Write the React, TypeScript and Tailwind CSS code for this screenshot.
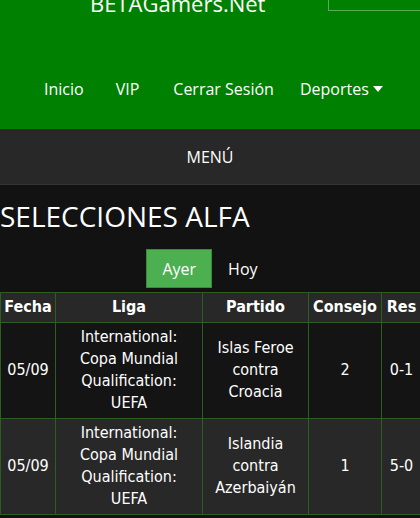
const sans = { fontFamily: '"Open Sans", "Noto Sans", sans-serif' };

const rows = [
  {
    fecha: '05/09',
    liga: ['International:', 'Copa Mundial', 'Qualification:', 'UEFA'],
    partido: ['Islas Feroe', 'contra', 'Croacia'],
    consejo: '2',
    res: '0-1',
  },
  {
    fecha: '05/09',
    liga: ['International:', 'Copa Mundial', 'Qualification:', 'UEFA'],
    partido: ['Islandia', 'contra', 'Azerbaiyán'],
    consejo: '1',
    res: '5-0',
  },
];

export default function App() {
  return (
    <div className="w-[420px] h-[518px] overflow-hidden bg-[#121212] text-white" style={sans}>
      {/* Header */}
      <header className="bg-[#008000] pb-[29px]">
        <div className="flex items-start h-[18px]">
          <div className="ml-[90px] -mt-[12px] text-[22px] leading-[30px] whitespace-nowrap">BETAGamers.Net</div>
          <div className="ml-auto -mt-[22px] -mr-[10px] h-[33px] w-[102px] border border-white/35" />
        </div>
        <nav className="mt-[60px] flex items-center pl-[44px] text-[16px] leading-[22px]">
          <span className="whitespace-nowrap">Inicio</span>
          <span className="ml-[32px] whitespace-nowrap">VIP</span>
          <span className="ml-[34px] whitespace-nowrap">Cerrar Sesión</span>
          <span className="ml-[26px] flex items-center gap-[4px] whitespace-nowrap">
            Deportes
            <svg width="10" height="6" viewBox="0 0 10 6" aria-hidden="true">
              <path d="M0 0h10L5 6z" fill="white" />
            </svg>
          </span>
        </nav>
      </header>

      {/* Menu bar */}
      <div className="h-[56px] flex items-center justify-center bg-[#282828] border-b border-[#333333] text-[16px]">
        MENÚ
      </div>

      {/* Title */}
      <h1 className="mt-[12px] text-[28px] leading-[38px] whitespace-nowrap">SELECCIONES ALFA</h1>

      {/* Tabs */}
      <div className="mt-[14px] flex justify-center text-[16px]">
        <button className="h-[39px] px-[15px] bg-[#4caf50] border border-[#3a8a3e] text-white">Ayer</button>
        <button className="h-[39px] px-[16px] text-white">Hoy</button>
      </div>

      {/* Table */}
      <div className="mt-[4px] w-[420px] overflow-hidden">
        <table
          className="table-fixed border-collapse w-[421px] text-center text-[16px] leading-[22px]"
          style={{ fontFamily: '"DejaVu Sans Condensed", "DejaVu Sans", sans-serif' }}
        >
          <colgroup>
            <col className="w-[55px]" />
            <col className="w-[147px]" />
            <col className="w-[106px]" />
            <col className="w-[73px]" />
            <col className="w-[40px]" />
          </colgroup>
          <thead>
            <tr className="bg-[#282828]">
              {['Fecha', 'Liga', 'Partido', 'Consejo', 'Res'].map((h) => (
                <th key={h} className="border border-[#2b5e20] pt-[3px] pb-[4px] font-bold whitespace-nowrap">
                  {h}
                </th>
              ))}
            </tr>
          </thead>
          <tbody>
            {rows.map((r, i) => (
              <tr key={i} className={i % 2 === 0 ? 'bg-[#141414]' : 'bg-[#282828]'}>
                <td className="border border-[#2b5e20] pt-[3px] pb-[4px]">{r.fecha}</td>
                <td className="border border-[#2b5e20] pt-[3px] pb-[4px]">
                  {r.liga.map((l, j) => (
                    <div key={j}>{l}</div>
                  ))}
                </td>
                <td className="border border-[#2b5e20] pt-[3px] pb-[4px]">
                  {r.partido.map((p, j) => (
                    <div key={j}>{p}</div>
                  ))}
                </td>
                <td className="border border-[#2b5e20] pt-[3px] pb-[4px]">{r.consejo}</td>
                <td className="border border-[#2b5e20] pt-[3px] pb-[4px] whitespace-nowrap">{r.res}</td>
              </tr>
            ))}
          </tbody>
        </table>
      </div>
    </div>
  );
}
